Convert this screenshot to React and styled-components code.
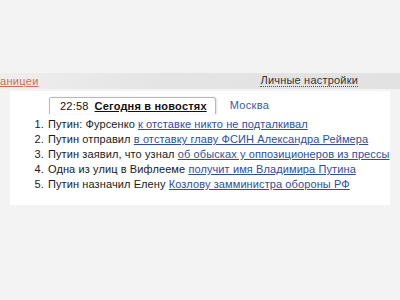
import React from 'react';
import styled, { createGlobalStyle } from 'styled-components';

const GlobalStyle = createGlobalStyle`
  body {
    margin: 0;
    background: #f3f3f3;
    font-family: "Liberation Sans", Arial, sans-serif;
  }
`;

const Page = styled.div`
  width: 400px;
  height: 300px;
  padding-top: 73px;
  box-sizing: border-box;
  overflow: hidden;
`;

const TopBar = styled.div`
  height: 16px;
  display: flex;
  align-items: center;
  justify-content: space-between;
  padding-right: 42px;
  background: linear-gradient(to right, #eeeeee, #e4e4e4 40%, #e2e2e2);
  font-size: 11px;
`;

const Crumb = styled.a`
  color: #d46a5a;
  text-decoration: underline;
  letter-spacing: 0.3px;
`;

const Settings = styled.span`
  color: #333;
  border-bottom: 1px dotted #555;
  line-height: 11px;
  letter-spacing: 0.2px;
`;

const Panel = styled.div`
  margin: 2px 10px 0;
  background: #fff;
  padding: 6px 0 13px;
`;

const Tabs = styled.div`
  display: flex;
  align-items: flex-end;
  padding-left: 39px;
  font-size: 11px;
`;

const Tab = styled.div`
  display: flex;
  gap: 6px;
  padding: 2px 8px 2px 10px;
  border: 1px solid #b8b8b8;
  border-bottom: none;
  border-radius: 2px 3px 0 0;
  box-shadow: 1px 0 2px rgba(0, 0, 0, 0.12);
  color: #111;
  letter-spacing: 0.2px;
`;

const TabLink = styled.a`
  font-weight: bold;
  color: #111;
  text-decoration: underline;
`;

const OtherTab = styled.a`
  margin-left: 14px;
  padding-bottom: 3px;
  color: #3b5aa6;
  font-size: 11px;
  letter-spacing: 0.3px;
`;

const List = styled.ol`
  margin: 3px 0 0;
  padding-left: 37px;
  font-size: 11px;
  line-height: 15px;
  letter-spacing: 0.1px;
  color: #1a1a1a;
  white-space: nowrap;
`;

const Item = styled.li`
  padding-left: 1px;
`;

const Link = styled.a`
  color: #2f4e9e;
  text-decoration: underline;
`;

const news = [
  ['Путин: Фурсенко ', 'к отставке никто не подталкивал'],
  ['Путин отправил ', 'в отставку главу ФСИН Александра Реймера'],
  ['Путин заявил, что узнал ', 'об обысках у оппозиционеров из прессы'],
  ['Одна из улиц в Вифлееме ', 'получит имя Владимира Путина'],
  ['Путин назначил Елену ', 'Козлову замминистра обороны РФ'],
];

export default function App() {
  return (
    <>
      <GlobalStyle />
      <Page>
        <TopBar>
          <Crumb>аницеи</Crumb>
          <Settings>Личные настройки</Settings>
        </TopBar>
        <Panel>
          <Tabs>
            <Tab>
              <span>22:58</span>
              <TabLink>Сегодня в новостях</TabLink>
            </Tab>
            <OtherTab>Москва</OtherTab>
          </Tabs>
          <List>
            {news.map(([text, link], i) => (
              <Item key={i}>
                {text}
                <Link>{link}</Link>
              </Item>
            ))}
          </List>
        </Panel>
      </Page>
    </>
  );
}
